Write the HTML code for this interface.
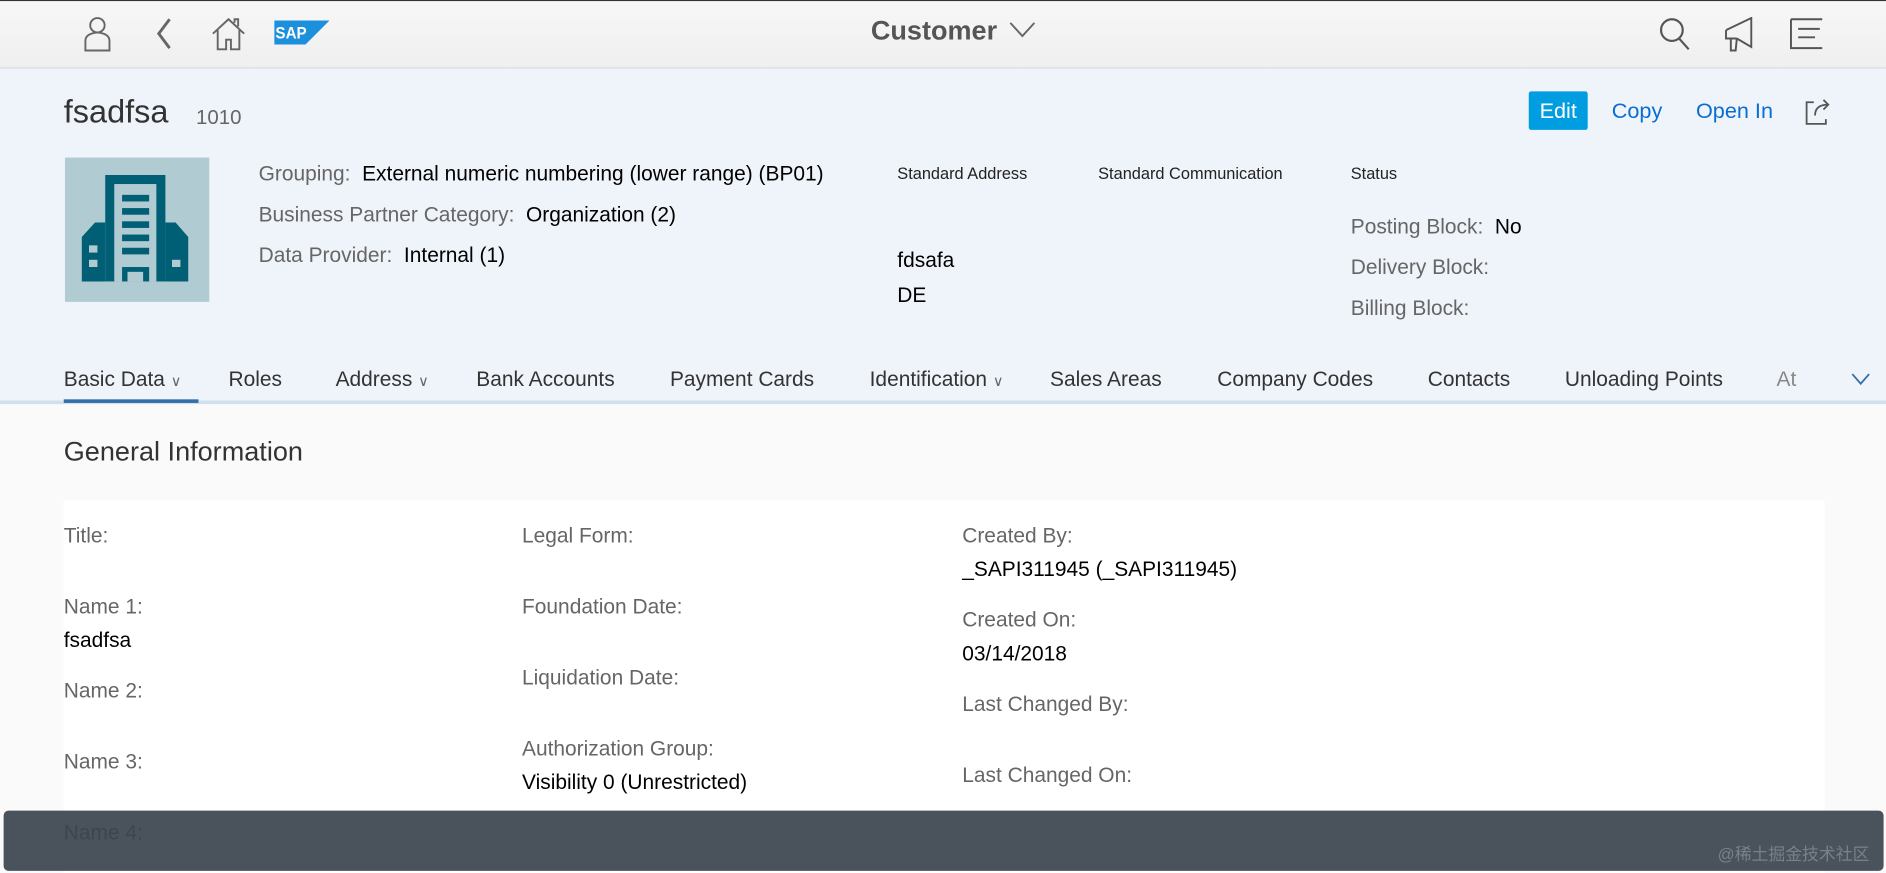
<!DOCTYPE html>
<html><head><meta charset="utf-8"><style>
html,body{margin:0;padding:0;width:1886px;height:872px;overflow:hidden;background:#fafafa}
#w{position:absolute;left:0;top:0;width:1568px;height:725px;transform:scale(1.2028);transform-origin:0 0;font-family:"Liberation Sans",Arial,sans-serif;background:#fafafa}
.a{position:absolute;white-space:nowrap}
.l{color:#666;font-size:17.4px}
.v{color:#000;font-size:17.4px}
.t{color:#333;font-size:17.4px}
</style></head><body><div id="w">
<div class="a" style="left:0;top:0;width:1568px;height:1px;background:#333"></div>
<div class="a" style="left:0;top:1px;width:1568px;height:55px;background:linear-gradient(#f7f7f7,#efefef);border-bottom:1px solid #d9d9d9"></div>
<svg class="a" style="left:66px;top:12px" width="30" height="32" viewBox="0 0 30 32" fill="none" stroke="#666" stroke-width="1.6"><circle cx="15" cy="9" r="6"/><path d="M5 30V22q0-6 10-7q10 1 10 7v8z"/></svg>
<svg class="a" style="left:126px;top:14px" width="20" height="28" viewBox="0 0 20 28" fill="none" stroke="#666" stroke-width="2.4"><path d="M15 2L6 14l9 12"/></svg>
<svg class="a" style="left:175px;top:13px" width="30" height="30" viewBox="0 0 30 30" fill="none" stroke="#666" stroke-width="1.6"><path d="M2 15L15 3l13 12M6 12v16h7v-8h4v8h7V12M20 6V3h3v6"/></svg>
<svg class="a" style="left:228px;top:17px" width="46" height="20" viewBox="0 0 46 20"><path d="M0 0h46L26 20H0z" fill="#1c8fdd"/><text x="1" y="15" font-family="Liberation Sans" font-weight="bold" font-size="14" fill="#fff" textLength="26" lengthAdjust="spacingAndGlyphs">SAP</text></svg>
<div class="a" style="left:724px;top:13px;font-size:22.5px;font-weight:bold;color:#555">Customer</div>
<svg class="a" style="left:839px;top:18px" width="22" height="14" viewBox="0 0 22 14" fill="none" stroke="#666" stroke-width="1.6"><path d="M1 1l10 11L21 1"/></svg>
<svg class="a" style="left:1378px;top:13px" width="30" height="30" viewBox="0 0 30 30" fill="none" stroke="#555" stroke-width="1.8"><circle cx="12" cy="12" r="9"/><path d="M18 19l8 9"/></svg>
<svg class="a" style="left:1432px;top:14px" width="30" height="30" viewBox="0 0 30 30" fill="none" stroke="#555" stroke-width="1.6"><path d="M3 11l21-10v24L12 18M3 11v7h9M3 11v7M7 18v10h4l1-10"/></svg>
<svg class="a" style="left:1487px;top:15px" width="30" height="26" viewBox="0 0 30 26" fill="none" stroke="#555" stroke-width="1.6"><path d="M2 1v24h26M2 1h26M8 9h18M8 16h14"/></svg>
<div class="a" style="left:0;top:57px;width:1568px;height:276px;background:#eff4fa"></div>
<div class="a" style="left:53px;top:78px;font-size:27px;color:#333">fsadfsa</div>
<div class="a" style="left:163px;top:88px;font-size:17px;color:#666">1010</div>
<div class="a" style="left:1271px;top:76px;width:49px;height:32px;background:#009de0;border-radius:2px;color:#fff;font-size:18px;line-height:32px;text-align:center">Edit</div>
<div class="a" style="left:1340px;top:82px;font-size:18px;color:#0a6ed1">Copy</div>
<div class="a" style="left:1410px;top:82px;font-size:18px;color:#0a6ed1">Open In</div>
<svg class="a" style="left:1500px;top:81px" width="24" height="24" viewBox="0 0 24 24" fill="none" stroke="#555" stroke-width="1.5"><path d="M8 4H2v18h16v-4M9 15q0-9 11-9M16 2l4 4-4 4"/></svg>
<div class="a" style="left:54px;top:131px;width:120px;height:120px;background:#b1cbd2"></div>
<svg class="a" style="left:54px;top:131px" width="120" height="120" viewBox="0 0 120 120">
<g fill="#005e75"><rect x="33.5" y="14.5" width="50" height="88.5"/><polygon points="14,66 25,54 33.5,54 33.5,103 14,103"/><polygon points="83.5,54 92,54 102.5,66 102.5,103 83.5,103"/></g>
<rect x="41" y="22" width="35" height="81" fill="#b1cbd2"/>
<g fill="#005e75"><rect x="47.5" y="31" width="22.5" height="5.5"/><rect x="47.5" y="42" width="22.5" height="5.5"/><rect x="47.5" y="53" width="22.5" height="5.5"/><rect x="47.5" y="64" width="22.5" height="5.5"/><rect x="47.5" y="75" width="22.5" height="5.5"/><rect x="47.5" y="91" width="22.5" height="12"/></g>
<g fill="#b1cbd2"><rect x="52" y="95" width="13" height="8"/><rect x="20" y="73" width="7" height="6"/><rect x="20" y="85" width="7" height="6"/><rect x="89" y="85" width="7" height="6"/></g></svg>
<div class="a l" style="left:215px;top:134px">Grouping:&nbsp; <span class="v">External numeric numbering (lower range) (BP01)</span></div>
<div class="a l" style="left:215px;top:168px">Business Partner Category:&nbsp; <span class="v">Organization (2)</span></div>
<div class="a l" style="left:215px;top:202px">Data Provider:&nbsp; <span class="v">Internal (1)</span></div>
<div class="a" style="left:746px;top:137px;font-size:13.6px;color:#222">Standard Address</div>
<div class="a" style="left:913px;top:137px;font-size:13.6px;color:#222">Standard Communication</div>
<div class="a" style="left:1123px;top:137px;font-size:13.6px;color:#222">Status</div>
<div class="a v" style="left:746px;top:206px">fdsafa</div>
<div class="a v" style="left:746px;top:235px">DE</div>
<div class="a l" style="left:1123px;top:178px">Posting Block:&nbsp; <span class="v">No</span></div>
<div class="a l" style="left:1123px;top:212px">Delivery Block:</div>
<div class="a l" style="left:1123px;top:246px">Billing Block:</div>
<div class="a" style="left:0;top:333px;width:1568px;height:3px;background:#cfe0ee"></div>
<div class="a" style="left:53px;top:332px;width:112px;height:3px;background:#346fa6"></div>
<div class="a t" style="left:53px;top:305px">Basic Data <span style="font-size:12px;color:#666">&#x2228;</span></div>
<div class="a t" style="left:190px;top:305px">Roles</div>
<div class="a t" style="left:279px;top:305px">Address <span style="font-size:12px;color:#666">&#x2228;</span></div>
<div class="a t" style="left:396px;top:305px">Bank Accounts</div>
<div class="a t" style="left:557px;top:305px">Payment Cards</div>
<div class="a t" style="left:723px;top:305px">Identification <span style="font-size:12px;color:#666">&#x2228;</span></div>
<div class="a t" style="left:873px;top:305px">Sales Areas</div>
<div class="a t" style="left:1012px;top:305px">Company Codes</div>
<div class="a t" style="left:1187px;top:305px">Contacts</div>
<div class="a t" style="left:1301px;top:305px">Unloading Points</div>
<div class="a t" style="left:1477px;top:305px;width:18px;overflow:hidden;color:#888">At</div>
<svg class="a" style="left:1539px;top:309px" width="16" height="12" viewBox="0 0 16 12" fill="none" stroke="#346fa6" stroke-width="1.5"><path d="M1 2l7 8 7-8"/></svg>
<div class="a" style="left:53px;top:363px;font-size:22.5px;color:#333">General Information</div>
<div class="a" style="left:53px;top:416px;width:1464px;height:310px;background:#fff"></div>
<div class="a l" style="left:53px;top:435px">Title:</div>
<div class="a l" style="left:53px;top:494px">Name 1:</div>
<div class="a v" style="left:53px;top:522px">fsadfsa</div>
<div class="a l" style="left:53px;top:564px">Name 2:</div>
<div class="a l" style="left:53px;top:623px">Name 3:</div>
<div class="a l" style="left:434px;top:435px">Legal Form:</div>
<div class="a l" style="left:434px;top:494px">Foundation Date:</div>
<div class="a l" style="left:434px;top:553px">Liquidation Date:</div>
<div class="a l" style="left:434px;top:612px">Authorization Group:</div>
<div class="a v" style="left:434px;top:640px">Visibility 0 (Unrestricted)</div>
<div class="a l" style="left:800px;top:435px">Created By:</div>
<div class="a v" style="left:800px;top:463px">_SAPI311945 (_SAPI311945)</div>
<div class="a l" style="left:800px;top:505px">Created On:</div>
<div class="a v" style="left:800px;top:533px">03/14/2018</div>
<div class="a l" style="left:800px;top:575px">Last Changed By:</div>
<div class="a l" style="left:800px;top:634px">Last Changed On:</div>
<div class="a" style="left:3px;top:674px;width:1563px;height:50px;background:#4a525b;border-radius:4px"></div>
<div class="a" style="left:53px;top:682px;font-size:17.4px;color:#3e454d">Name 4:</div>
<div class="a" style="left:1428px;top:700px;font-size:14px;color:#7a8088;font-family:'Liberation Sans','Noto Sans CJK SC',sans-serif">@稀土掘金技术社区</div>
</div></body></html>
